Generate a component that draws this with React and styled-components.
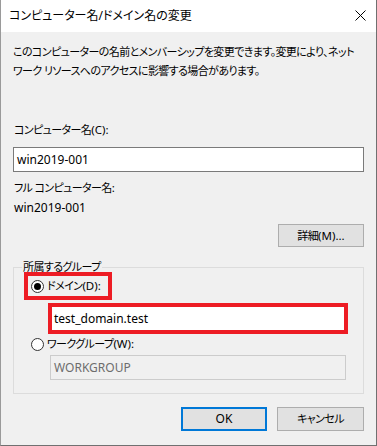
import React from "react"
import styled, { createGlobalStyle } from "styled-components"

const GlobalStyle = createGlobalStyle`
    html, body {
        margin: 0;
        padding: 0;
        background: #f0f0f0;
    }
    body {
        font-family: "Noto Sans", "Noto Sans CJK JP", sans-serif;
        font-size: 11px;
        letter-spacing: -0.6px;
        font-feature-settings: "palt";
        color: #000;
    }
`

const Window = styled.div`
    width: 377px;
    height: 446px;
    box-sizing: border-box;
    display: flex;
    flex-direction: column;
    border-left: 1px solid #9a9a9a;
    border-right: 1px solid #707070;
    border-bottom: 1px solid #707070;
    background: #f0f0f0;
`

const TitleBar = styled.div`
    height: 31px;
    flex: none;
    background: #fff;
    display: flex;
    align-items: center;
    justify-content: space-between;
    padding: 0 10px 1px 8px;
`

const Title = styled.span`
    font-size: 12px;
    letter-spacing: 0;
    line-height: 16px;
`

const Body = styled.div`
    flex: 1;
    display: flex;
    flex-direction: column;
    padding: 10px 12px 0 12px;
`

const Description = styled.p`
    margin: 0;
    line-height: 19px;
    white-space: nowrap;
`

// latin runs inside japanese labels (Segoe UI in the original)
const Latin = styled.span`
    font-size: 11.5px;
    letter-spacing: 0;
`

const Label = styled.div`
    line-height: 16px;
    margin-top: ${(p) => p.$top || 0}px;
    padding-left: 1px;
    font-size: ${(p) => (p.$latin ? 12 : 11)}px;
    letter-spacing: ${(p) => (p.$latin ? "0" : "-0.6px")};
`

const TextBox = styled.div`
    height: 25px;
    box-sizing: border-box;
    width: ${(p) => (p.$width ? p.$width + "px" : "auto")};
    margin-top: ${(p) => p.$top || 0}px;
    margin-left: ${(p) => p.$left || 0}px;
    border: 1px solid ${(p) => (p.$disabled ? "#cccccc" : "#7a7a7a")};
    background: ${(p) => (p.$disabled ? "#f0f0f0" : "#fff")};
    color: ${(p) => (p.$disabled ? "#6d6d6d" : "#000")};
    display: flex;
    align-items: center;
    padding-left: 3px;
    line-height: 16px;
    font-size: 12px;
    letter-spacing: 0;
`

const ButtonRow = styled.div`
    display: flex;
    justify-content: flex-end;
    gap: 10px;
    margin-top: ${(p) => p.$top || 0}px;
`

const Button = styled.button`
    width: ${(p) => p.$width || 86}px;
    height: ${(p) => p.$height || 23}px;
    box-sizing: border-box;
    background: #e1e1e1;
    border: ${(p) => (p.$default ? "2px solid #0078d7" : "1px solid #adadad")};
    font-family: inherit;
    font-size: ${(p) => (p.$latin ? 12 : 11)}px;
    letter-spacing: ${(p) => (p.$latin ? "0" : "-0.6px")};
    font-feature-settings: "palt";
    color: #000;
    padding: 0;
    line-height: 16px;
`

const Group = styled.fieldset`
    margin: 14px 0 0 0;
    padding: 0 15px 13px 10px;
    border: 1px solid #dcdcdc;
    display: flex;
    flex-direction: column;
    min-width: 0;
`

const Legend = styled.legend`
    padding: 0 1px;
    margin: 0 0 -1px -2px;
    line-height: 12px;
`

const Highlight = styled.div`
    border: 4px solid #ed1c24;
    box-sizing: border-box;
    align-self: flex-start;
    margin-left: ${(p) => p.$left || 0}px;
    margin-top: ${(p) => p.$top || 0}px;
    width: ${(p) => (p.$width ? p.$width + "px" : "auto")};
`

const RadioRow = styled.label`
    display: flex;
    align-items: center;
    gap: 3px;
    height: ${(p) => p.$height || 16}px;
    padding: 0 7px 0 3px;
    margin-top: ${(p) => p.$top || 0}px;
    margin-left: ${(p) => p.$left || 0}px;
    line-height: 16px;
`

const Radio = styled.span`
    width: 13px;
    height: 13px;
    box-sizing: border-box;
    border-radius: 50%;
    border: 1px solid #333;
    background: #fff;
    display: flex;
    align-items: center;
    justify-content: center;
    flex: none;
    &::after {
        content: "";
        width: 7px;
        height: 7px;
        border-radius: 50%;
        background: ${(p) => (p.$checked ? "#000" : "transparent")};
    }
`

const DomainField = styled.div`
    height: 23px;
    background: #fff;
    display: flex;
    align-items: center;
    padding-left: 2px;
    line-height: 16px;
    font-size: 12px;
    letter-spacing: 0;
`

function CloseIcon() {
    return (
        <svg width="11" height="11" viewBox="0 0 11 11">
            <path d="M0.5 0.5L10.5 10.5M10.5 0.5L0.5 10.5" stroke="#000" strokeWidth="1" />
        </svg>
    )
}

export default function App() {
    return (
        <>
            <GlobalStyle />
            <Window>
                <TitleBar>
                    <Title>コンピューター名/ドメイン名の変更</Title>
                    <CloseIcon />
                </TitleBar>
                <Body>
                    <Description>
                        このコンピューターの名前とメンバーシップを変更できます。変更により、ネット
                        <br />
                        ワーク リソースへのアクセスに影響する場合があります。
                    </Description>
                    <Label $top={42}>
                        コンピューター名<Latin>(C):</Latin>
                    </Label>
                    <TextBox $top={9}>win2019-001</TextBox>
                    <Label $top={8}>
                        フル コンピューター名<Latin>:</Latin>
                    </Label>
                    <Label $top={4} $latin>win2019-001</Label>
                    <ButtonRow $top={8}>
                        <Button>
                            詳細<Latin>(M)...</Latin>
                        </Button>
                    </ButtonRow>
                    <Group>
                        <Legend>所属するグループ</Legend>
                        <Highlight>
                            <RadioRow $height={20}>
                                <Radio $checked />
                                <span>
                                    ドメイン<Latin>(D):</Latin>
                                </span>
                            </RadioRow>
                        </Highlight>
                        <Highlight $left={24} $top={3} $width={300}>
                            <DomainField>test_domain.test</DomainField>
                        </Highlight>
                        <RadioRow $top={2} $left={4}>
                            <Radio />
                            <span>
                                ワークグループ<Latin>(W):</Latin>
                            </span>
                        </RadioRow>
                        <TextBox $top={3} $left={26} $width={296} $disabled>
                            WORKGROUP
                        </TextBox>
                    </Group>
                    <ButtonRow $top={13}>
                        <Button $default $latin $height={24}>OK</Button>
                        <Button $width={87} $height={24}>キャンセル</Button>
                    </ButtonRow>
                </Body>
            </Window>
        </>
    )
}
